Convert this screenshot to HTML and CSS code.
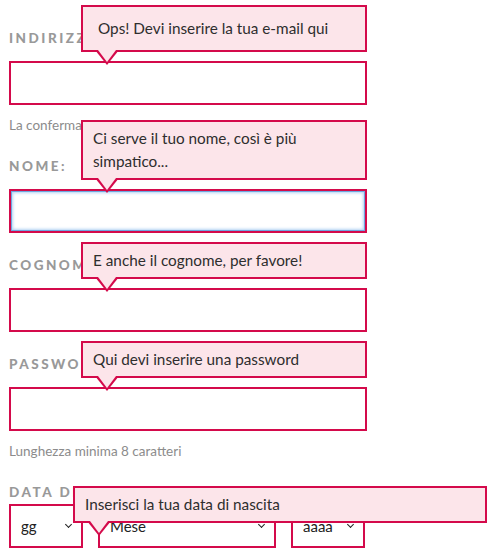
FILE: index.html
```html
<!DOCTYPE html>
<html lang="it">
<head>
<meta charset="utf-8">
<title>Registrazione</title>
<link rel="stylesheet" href="styles.css">
</head>
<body>
<form class="form" novalidate>
  <div class="field">
    <label class="label" for="email">Indirizzo e-mail:</label>
    <div class="control">
      <input class="input" id="email" type="email">
      <div class="tip tip--roomy">Ops! Devi inserire la tua e-mail qui</div>
    </div>
    <p class="help">La conferma dell'iscrizione ti arriverà via e-mail</p>
  </div>

  <div class="field">
    <label class="label" for="nome">Nome:</label>
    <div class="control">
      <input class="input input--focus" id="nome" type="text">
      <div class="tip">Ci serve il tuo nome, così è più simpatico...</div>
    </div>
  </div>

  <div class="field">
    <label class="label" for="cognome">Cognome:</label>
    <div class="control">
      <input class="input" id="cognome" type="text">
      <div class="tip">E anche il cognome, per favore!</div>
    </div>
  </div>

  <div class="field">
    <label class="label" for="pwd">Password:</label>
    <div class="control">
      <input class="input" id="pwd" type="password">
      <div class="tip">Qui devi inserire una password</div>
    </div>
    <p class="help">Lunghezza minima 8 caratteri</p>
  </div>

  <div class="field">
    <span class="label label--date">Data di nascita:</span>
    <div class="control dates">
      <span class="select-wrap select-wrap--day"><select class="select"><option>gg</option></select></span>
      <span class="select-wrap select-wrap--month"><select class="select"><option>Mese</option></select></span>
      <span class="select-wrap select-wrap--year"><select class="select"><option>aaaa</option></select></span>
      <div class="tip tip--date">Inserisci la tua data di nascita</div>
    </div>
  </div>
</form>
</body>
</html>
```

FILE: styles.css
```css
* { box-sizing: border-box; }

html, body {
  margin: 0;
  padding: 0;
  background: #fff;
}

body {
  font-family: Lato, "Open Sans", sans-serif;
  color: #333;
}

.form {
  padding: 30px 9px 0;
  width: 376px;
}

.field {
  margin-bottom: 24px;
}

.label {
  display: block;
  font-family: Lato, sans-serif;
  font-weight: 900;
  font-size: 13.5px;
  line-height: 16px;
  letter-spacing: 2.5px;
  text-transform: uppercase;
  color: #999;
  margin-bottom: 15px;
}

.label--date {
  margin-bottom: 4px;
}

.control {
  position: relative;
  width: 358px;
}

.input {
  display: block;
  width: 358px;
  height: 44px;
  border: 2px solid #d40a4b;
  background: #fff;
  margin: 0;
  padding: 0 10px;
  font: inherit;
  outline: none;
}

.input--focus {
  box-shadow: inset 0 0 0 1px #6ea8e0, inset 0 0 3px 2px #b3d3f3;
}

.help {
  margin: 12px 0 0;
  font-size: 13.5px;
  line-height: 17px;
  color: #8c8c8c;
}

.tip {
  position: absolute;
  left: 72px;
  right: 0;
  bottom: calc(100% + 9px);
  background: #fce5ea;
  border: 2px solid #d40a4b;
  padding: 5px 10px;
  font-size: 15.3px;
  line-height: 23px;
  color: #2e2e2e;
}

.tip::before,
.tip::after {
  content: "";
  position: absolute;
  top: 100%;
  width: 0;
  height: 0;
  border-style: solid;
  border-color: transparent;
}

.tip::before {
  left: 12px;
  border-width: 15px 12px 0;
  border-top-color: #d40a4b;
}

.tip::after {
  left: 14.5px;
  border-width: 12px 9.5px 0;
  border-top-color: #fce5ea;
}

.tip--roomy {
  padding: 10px 15px;
}

.tip--date {
  left: 64px;
  right: auto;
  width: 414px;
  bottom: calc(100% - 19px);
}

.dates {
  display: flex;
  gap: 15px;
  width: auto;
}

.select-wrap {
  position: relative;
  display: block;
}

.select-wrap::after {
  content: "";
  position: absolute;
  top: 18px;
  right: 12px;
  width: 4px;
  height: 4px;
  border-right: 1.8px solid #222;
  border-bottom: 1.8px solid #222;
  transform: rotate(45deg);
  pointer-events: none;
}

.select {
  -webkit-appearance: none;
  appearance: none;
  display: block;
  height: 44px;
  border: 2px solid #d40a4b;
  border-radius: 0;
  background: #fff;
  margin: 0;
  padding: 0 10px;
  font-family: Lato, sans-serif;
  font-size: 15px;
  color: #222;
  outline: none;
}

.select-wrap--day .select { width: 74px; }
.select-wrap--month .select { width: 178px; }
.select-wrap--year .select { width: 74px; }
```
